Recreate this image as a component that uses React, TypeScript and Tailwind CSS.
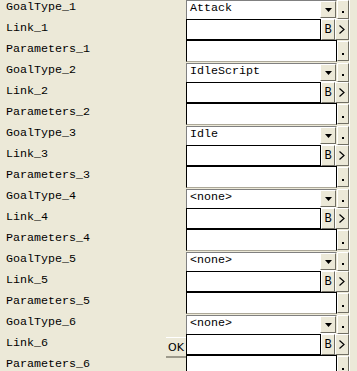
import React from "react";

const groups = [
  { n: 1, goal: "Attack" },
  { n: 2, goal: "IdleScript" },
  { n: 3, goal: "Idle" },
  { n: 4, goal: "<none>" },
  { n: 5, goal: "<none>" },
  { n: 6, goal: "<none>" },
];

const mono = { fontFamily: '"Liberation Mono", "Courier New", monospace' };

function RaisedBtn({ className, children }: { className: string; children?: React.ReactNode }) {
  return (
    <div
      className={
        "shrink-0 bg-[#ece9d8] border-t border-l border-t-white border-l-white border-b border-r border-b-[#716f64] border-r-[#716f64] flex items-center justify-center text-black " +
        className
      }
    >
      {children}
    </div>
  );
}

function Dot() {
  return <div className="w-[2px] h-[2px] bg-black mt-[5px]" />;
}

function Group({ goal }: { goal: string }) {
  return (
    <div className="flex flex-col h-[63px] shrink-0">
      {/* combo row */}
      <div className="flex h-[19px] shrink-0">
        <div className="shrink-0 w-[151px] h-[19px] bg-white border-t border-l border-t-[#808080] border-l-[#808080] border-r border-r-[#ece9d8] flex">
          <div className="flex-1 pl-[3px] text-[11.67px] leading-[15px] text-black whitespace-pre" style={mono}>
            {goal}
          </div>
          <RaisedBtn className="w-[16px] h-[17px]">
            <svg width="7" height="4" viewBox="0 0 7 4">
              <polygon points="0,0 7,0 3.5,4" fill="black" />
            </svg>
          </RaisedBtn>
        </div>
        <RaisedBtn className="w-[12px] h-[19px]">
          <Dot />
        </RaisedBtn>
      </div>
      {/* link row */}
      <div className="flex h-[21px] shrink-0">
        <div className="shrink-0 w-[135px] h-[21px] bg-white border border-black" />
        <RaisedBtn className="w-[14px] h-[21px]">
          <span className="text-[12px] leading-none" style={mono}>B</span>
        </RaisedBtn>
        <RaisedBtn className="w-[14px] h-[21px]">
          <svg width="6" height="9" viewBox="0 0 6 9">
            <polyline points="0.5,0.5 5,4.5 0.5,8.5" fill="none" stroke="black" strokeWidth="1.2" />
          </svg>
        </RaisedBtn>
      </div>
      {/* params row */}
      <div className="flex h-[22px] shrink-0">
        <div className="shrink-0 w-[151px] h-[22px] bg-white border-t border-l border-r border-black border-b border-b-[#aca899]" />
        <RaisedBtn className="w-[12px] h-[20px] mt-px">
          <Dot />
        </RaisedBtn>
      </div>
    </div>
  );
}

export default function App() {
  const labels: string[] = [];
  groups.forEach((g) => {
    labels.push(`GoalType_${g.n}`, `Link_${g.n}`, `Parameters_${g.n}`);
  });
  return (
    <div className="relative w-[357px] h-[371px] bg-[#ece9d8] overflow-hidden flex">
      <div className="w-[186px] shrink-0 flex flex-col">
        {labels.map((l, i) => (
          <div key={i} className="shrink-0 h-[21px] pl-[6px] text-[11.67px] leading-[15px] text-black" style={mono}>
            {l}
          </div>
        ))}
      </div>
      <div className="w-[163px] shrink-0 flex flex-col">
        {groups.map((g) => (
          <Group key={g.n} goal={g.goal} />
        ))}
      </div>
      <div className="w-px shrink-0 bg-white h-full" />
      <div className="flex-1" />
      <div className="absolute left-[166px] top-[337px] w-[20px] h-[21px] bg-[#ece9d8] border-t border-t-white border-b-2 border-b-[#9d9a8c] flex items-center pl-[2px]">
        <span className="text-[11px] leading-none text-black" style={{ fontFamily: '"DejaVu Sans", "Liberation Sans", sans-serif' }}>
          OK
        </span>
      </div>
    </div>
  );
}
